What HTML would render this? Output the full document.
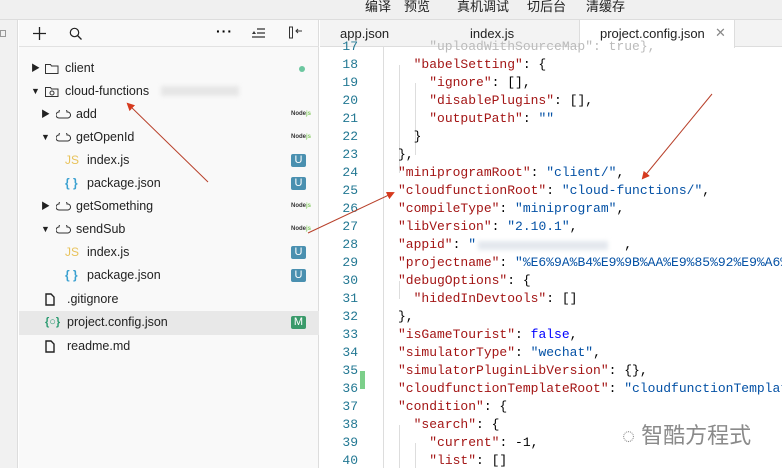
<!DOCTYPE html>
<html><head><meta charset="utf-8"><style>
*{margin:0;padding:0;box-sizing:border-box}
body{width:782px;height:468px;overflow:hidden;background:#fff;font-family:"Liberation Sans","Noto Sans CJK SC",sans-serif;position:relative}
.top{position:absolute;left:0;top:0;width:782px;height:20px;background:#f0f0f0;border-bottom:1px solid #ddd}
.top span{position:absolute;top:-4px;font-size:13px;color:#222}
.strip{position:absolute;left:0;top:20px;width:18px;height:448px;background:#f1f1f1;border-right:1px solid #ddd}
.side{position:absolute;left:19px;top:20px;width:300px;height:448px;background:#f9f9f9;border-right:1px solid #ddd}
.tb{position:absolute;left:0;top:0;width:300px;height:27px;border-bottom:1px solid #e2e2e2}
.row{position:absolute;left:0;width:300px;height:23px;font-size:12.5px;color:#222;line-height:23px}
.row .t{position:absolute}
.badge{position:absolute;left:272px;top:5px;width:15px;height:13px;background:#4a90b0;color:#fff;font-size:11px;line-height:13px;text-align:center;border-radius:2px}
.node{position:absolute;left:272px;font-size:6px;color:#333;font-weight:bold}
.tabs{position:absolute;left:320px;top:20px;width:462px;height:27px;background:#f3f3f3;border-bottom:1px solid #ddd;font-size:13px;color:#222}
.tabs span{position:absolute;top:6px}
.active{position:absolute;left:259px;top:0;width:156px;height:28px;background:#fff;border-left:1px solid #ddd;border-right:1px solid #ddd}
.code{position:absolute;left:320px;top:47px;width:462px;height:421px;font-family:"Liberation Mono",monospace;font-size:13px}
.ln{position:absolute;left:0;width:38px;text-align:right;color:#237893;height:18px;line-height:18px}
.cl{position:absolute;left:78px;white-space:pre;color:#000;height:18px;line-height:18px}
.k{color:#a31515}.s{color:#0451a5}.b{color:#0000ff}
.guide{position:absolute;width:1px;background:#ddd}
</style></head><body>
<div class="top">
<span style="left:365px">编译</span><span style="left:404px">预览</span><span style="left:457px">真机调试</span><span style="left:527px">切后台</span><span style="left:586px">清缓存</span>
</div>
<div class="strip"><div style="position:absolute;left:0;top:10px;width:6px;height:7px;border:1px solid #999"></div></div>
<div class="side">
<div class="tb">
<svg style="position:absolute;left:14px;top:7px" width="13" height="13"><path d="M6.5 0v13M0 6.5h13" stroke="#222" stroke-width="1.3"/></svg>
<svg style="position:absolute;left:50px;top:7px" width="13" height="13"><circle cx="5.5" cy="5.5" r="4.2" fill="none" stroke="#222" stroke-width="1.2"/><path d="M8.5 8.5l4 4" stroke="#222" stroke-width="1.3"/></svg>
<span style="position:absolute;left:197px;top:3px;font-size:14px;font-weight:bold;letter-spacing:1px">···</span>
<svg style="position:absolute;left:233px;top:8px" width="13" height="10"><path d="M0 9h13M5 5h8M5 1h8" stroke="#333" stroke-width="1.2"/><path d="M0 6l2-3 2 3z" fill="#333"/></svg>
<svg style="position:absolute;left:270px;top:6px" width="14" height="14"><rect x="0.5" y="1" width="3" height="11" fill="none" stroke="#333"/><path d="M7 5h6M9 3l-2 2 2 2" stroke="#333" fill="none"/></svg>
</div>
<div class="row" style="top:37px"><span class="t" style="left:12px;font-size:9px">▶</span>
<svg class="t" style="left:26px;top:6px" width="14" height="11"><path d="M0.5 1.5h5l1 1.5h6.5v7.5h-12.5z" fill="none" stroke="#333"/></svg><span class="t" style="left:46px">client</span>
<div style="position:absolute;left:280px;top:9px;width:6px;height:6px;border-radius:50%;background:#6cc7a0"></div></div>
<div class="row" style="top:60px"><span class="t" style="left:12px;font-size:9px">▼</span>
<svg class="t" style="left:26px;top:6px" width="14" height="11"><path d="M0.5 1.5h5l1 1.5h6.5v7.5h-12.5z" fill="none" stroke="#333"/><circle cx="7" cy="7" r="2" fill="none" stroke="#333"/></svg><span class="t" style="left:46px">cloud-functions</span>
<div style="position:absolute;left:142px;top:6px;width:78px;height:10px;background:#e6e6e6;filter:blur(2px)"></div></div>
<div class="row" style="top:83px"><span class="t" style="left:22px;font-size:9px">▶</span>
<svg class="t" style="left:37px;top:7px" width="15" height="9"><path d="M3 8a3 3 0 0 1 0-6a4 4 0 0 1 8 0a3 3 0 0 1 1 6z" fill="none" stroke="#333"/></svg><span class="t" style="left:57px">add</span><span class="node">Node<span style="color:#8c6">js</span></span></div>
<div class="row" style="top:106px"><span class="t" style="left:22px;font-size:9px">▼</span>
<svg class="t" style="left:37px;top:7px" width="15" height="9"><path d="M3 8a3 3 0 0 1 0-6a4 4 0 0 1 8 0a3 3 0 0 1 1 6z" fill="none" stroke="#333"/></svg><span class="t" style="left:57px">getOpenId</span><span class="node">Node<span style="color:#8c6">js</span></span></div>
<div class="row" style="top:129px"><span class="t" style="left:46px;color:#e8c25a;font-size:12px">JS</span><span class="t" style="left:68px">index.js</span><div class="badge">U</div></div>
<div class="row" style="top:152px"><span class="t" style="left:46px;color:#3aa0d0;font-size:12px;font-weight:bold">{ }</span><span class="t" style="left:68px">package.json</span><div class="badge">U</div></div>
<div class="row" style="top:175px"><span class="t" style="left:22px;font-size:9px">▶</span>
<svg class="t" style="left:37px;top:7px" width="15" height="9"><path d="M3 8a3 3 0 0 1 0-6a4 4 0 0 1 8 0a3 3 0 0 1 1 6z" fill="none" stroke="#333"/></svg><span class="t" style="left:57px">getSomething</span><span class="node">Node<span style="color:#8c6">js</span></span></div>
<div class="row" style="top:198px"><span class="t" style="left:22px;font-size:9px">▼</span>
<svg class="t" style="left:37px;top:7px" width="15" height="9"><path d="M3 8a3 3 0 0 1 0-6a4 4 0 0 1 8 0a3 3 0 0 1 1 6z" fill="none" stroke="#333"/></svg><span class="t" style="left:57px">sendSub</span><span class="node">Node<span style="color:#8c6">js</span></span></div>
<div class="row" style="top:221px"><span class="t" style="left:46px;color:#e8c25a;font-size:12px">JS</span><span class="t" style="left:68px">index.js</span><div class="badge">U</div></div>
<div class="row" style="top:244px"><span class="t" style="left:46px;color:#3aa0d0;font-size:12px;font-weight:bold">{ }</span><span class="t" style="left:68px">package.json</span><div class="badge">U</div></div>
<div class="row" style="top:268px"><svg class="t" style="left:26px;top:5px" width="10" height="13"><path d="M1 1h5l3 3v8h-8z" fill="none" stroke="#222" stroke-width="1.4"/></svg><span class="t" style="left:48px">.gitignore</span></div>
<div class="row" style="top:291px;height:24px;background:#e8e8e8"><span class="t" style="left:26px;color:#2a9a70;font-size:11px;font-weight:bold">{○}</span><span class="t" style="left:48px">project.config.json</span><div class="badge" style="background:#3a9a6a">M</div></div>
<div class="row" style="top:315px"><svg class="t" style="left:26px;top:5px" width="10" height="13"><path d="M1 1h5l3 3v8h-8z" fill="none" stroke="#222" stroke-width="1.4"/></svg><span class="t" style="left:48px">readme.md</span></div>
</div>
<div class="tabs">
<span style="left:20px">app.json</span><span style="left:150px">index.js</span>
<div class="active"><span style="left:20px;top:6px">project.config.json</span><span style="left:135px;top:5px;color:#888">✕</span></div>
</div>
<div class="code">
<div class="guide" style="left:63px;top:0;height:421px"></div>
<div class="guide" style="left:79px;top:18px;height:108px"></div>
<div class="guide" style="left:95px;top:36px;height:72px"></div>
<div class="guide" style="left:79px;top:234px;height:18px"></div>
<div class="guide" style="left:79px;top:378px;height:43px"></div>
<div class="guide" style="left:95px;top:396px;height:25px"></div>
<div style="position:absolute;left:40px;top:324px;width:5px;height:18px;background:#7ccf8a"></div>
<div class="ln" style="top:-9px">17</div><div class="cl" style="top:-9px;color:#bbb">    "uploadWithSourceMap": true},</div>
<div class="ln" style="top:9px">18</div><div class="cl" style="top:9px">  <span class="k">"babelSetting"</span>: {</div>
<div class="ln" style="top:27px">19</div><div class="cl" style="top:27px">    <span class="k">"ignore"</span>: [],</div>
<div class="ln" style="top:45px">20</div><div class="cl" style="top:45px">    <span class="k">"disablePlugins"</span>: [],</div>
<div class="ln" style="top:63px">21</div><div class="cl" style="top:63px">    <span class="k">"outputPath"</span>: <span class="s">""</span></div>
<div class="ln" style="top:81px">22</div><div class="cl" style="top:81px">  }</div>
<div class="ln" style="top:99px">23</div><div class="cl" style="top:99px">},</div>
<div class="ln" style="top:117px">24</div><div class="cl" style="top:117px"><span class="k">"miniprogramRoot"</span>: <span class="s">"client/"</span>,</div>
<div class="ln" style="top:135px">25</div><div class="cl" style="top:135px"><span class="k">"cloudfunctionRoot"</span>: <span class="s">"cloud-functions/"</span>,</div>
<div class="ln" style="top:153px">26</div><div class="cl" style="top:153px"><span class="k">"compileType"</span>: <span class="s">"miniprogram"</span>,</div>
<div class="ln" style="top:171px">27</div><div class="cl" style="top:171px"><span class="k">"libVersion"</span>: <span class="s">"2.10.1"</span>,</div>
<div class="ln" style="top:189px">28</div><div class="cl" style="top:189px"><span class="k">"appid"</span>: <span class="s">"</span>                   ,</div>
<div style="position:absolute;left:158px;top:194px;width:130px;height:9px;background:#e4e8ee;filter:blur(2px)"></div>
<div class="ln" style="top:207px">29</div><div class="cl" style="top:207px"><span class="k">"projectname"</span>: <span class="s">"%E6%9A%B4%E9%9B%AA%E9%85%92%E9%A6%</span></div>
<div class="ln" style="top:225px">30</div><div class="cl" style="top:225px"><span class="k">"debugOptions"</span>: {</div>
<div class="ln" style="top:243px">31</div><div class="cl" style="top:243px">  <span class="k">"hidedInDevtools"</span>: []</div>
<div class="ln" style="top:261px">32</div><div class="cl" style="top:261px">},</div>
<div class="ln" style="top:279px">33</div><div class="cl" style="top:279px"><span class="k">"isGameTourist"</span>: <span class="b">false</span>,</div>
<div class="ln" style="top:297px">34</div><div class="cl" style="top:297px"><span class="k">"simulatorType"</span>: <span class="s">"wechat"</span>,</div>
<div class="ln" style="top:315px">35</div><div class="cl" style="top:315px"><span class="k">"simulatorPluginLibVersion"</span>: {},</div>
<div class="ln" style="top:333px">36</div><div class="cl" style="top:333px"><span class="k">"cloudfunctionTemplateRoot"</span>: <span class="s">"cloudfunctionTemplat</span></div>
<div class="ln" style="top:351px">37</div><div class="cl" style="top:351px"><span class="k">"condition"</span>: {</div>
<div class="ln" style="top:369px">38</div><div class="cl" style="top:369px">  <span class="k">"search"</span>: {</div>
<div class="ln" style="top:387px">39</div><div class="cl" style="top:387px">    <span class="k">"current"</span>: -1,</div>
<div class="ln" style="top:405px">40</div><div class="cl" style="top:405px">    <span class="k">"list"</span>: []</div>
</div>
<div style="position:absolute;left:622px;top:418px;font-size:22px;color:#8a8a8a;font-family:'Liberation Sans','Noto Sans CJK SC',sans-serif">◌ 智酷方程式</div>
<svg style="position:absolute;left:0;top:0" width="782" height="468">
<defs><marker id="a" markerWidth="8" markerHeight="8" refX="6" refY="4" orient="auto"><path d="M0 0L8 4L0 8z" fill="#d63a1e"/></marker></defs>
<path d="M208 182L128 104" stroke="#b8402a" stroke-width="1" marker-end="url(#a)"/>
<path d="M712 94L643 178" stroke="#b8402a" stroke-width="1" marker-end="url(#a)"/>
<path d="M308 233L393 193" stroke="#b8402a" stroke-width="1" marker-end="url(#a)"/>
</svg>
</body></html>
